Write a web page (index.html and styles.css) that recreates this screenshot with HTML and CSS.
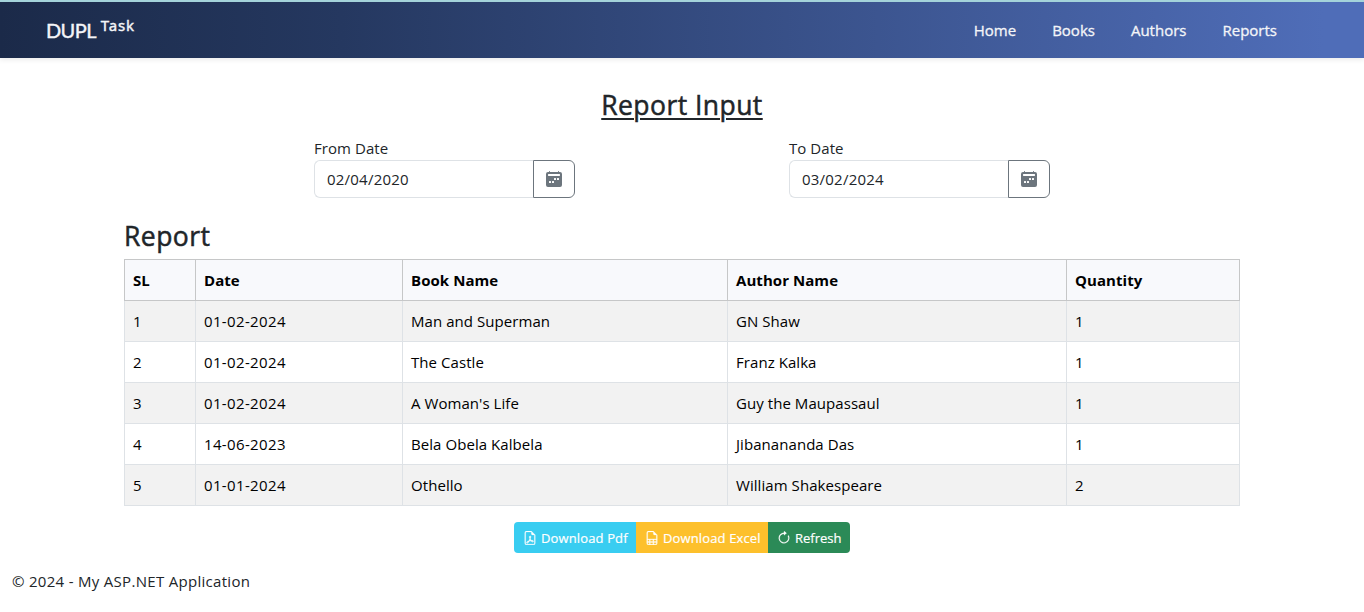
FILE: index.html
```html
<!DOCTYPE html>
<html lang="en">
<head>
<meta charset="utf-8">
<title>Report</title>
<link rel="stylesheet" href="styles.css">
</head>
<body>
<svg class="sprite" aria-hidden="true">
  <symbol id="calendar" viewBox="0 0 16 16"><path d="M3.5 0a.5.5 0 0 1 .5.5V1h8V.5a.5.5 0 0 1 1 0V1h1a2 2 0 0 1 2 2v11a2 2 0 0 1-2 2H2a2 2 0 0 1-2-2V3a2 2 0 0 1 2-2h1V.5a.5.5 0 0 1 .5-.5m9.954 3H2.545c-.3 0-.545.224-.545.5v1c0 .276.244.5.545.5h10.91c.3 0 .545-.224.545-.5v-1c0-.276-.244-.5-.546-.5M8.5 7a.5.5 0 0 0-.5.5v1a.5.5 0 0 0 .5.5h1a.5.5 0 0 0 .5-.5v-1a.5.5 0 0 0-.5-.5zm3 0a.5.5 0 0 0-.5.5v1a.5.5 0 0 0 .5.5h1a.5.5 0 0 0 .5-.5v-1a.5.5 0 0 0-.5-.5zM3 10.5v1a.5.5 0 0 0 .5.5h1a.5.5 0 0 0 .5-.5v-1a.5.5 0 0 0-.5-.5h-1a.5.5 0 0 0-.5.5m3.5-.5a.5.5 0 0 0-.5.5v1a.5.5 0 0 0 .5.5h1a.5.5 0 0 0 .5-.5v-1a.5.5 0 0 0-.5-.5z"/></symbol>
</svg>
<header class="navbar">
  <a class="brand">DUPL<sup class="brand-sup">Task</sup></a>
  <nav class="nav">
    <a>Home</a>
    <a>Books</a>
    <a>Authors</a>
    <a>Reports</a>
  </nav>
</header>
<main class="container">
  <h3 class="title">Report Input</h3>
  <div class="filters">
    <div class="field">
      <label class="label">From Date</label>
      <div class="group">
        <span class="input">02/04/2020</span>
        <button class="pick"><svg width="16" height="16"><use href="#calendar"/></svg></button>
      </div>
    </div>
    <div class="field">
      <label class="label">To Date</label>
      <div class="group">
        <span class="input">03/02/2024</span>
        <button class="pick"><svg width="16" height="16"><use href="#calendar"/></svg></button>
      </div>
    </div>
  </div>
  <h3 class="subtitle">Report</h3>
  <table class="table">
    <colgroup><col class="c1"><col class="c2"><col class="c3"><col class="c4"><col class="c5"></colgroup>
    <thead><tr><th>SL</th><th>Date</th><th>Book Name</th><th>Author Name</th><th>Quantity</th></tr></thead>
    <tbody>
      <tr><td>1</td><td class="date">01-02-2024</td><td>Man and Superman</td><td>GN Shaw</td><td>1</td></tr>
      <tr><td>2</td><td class="date">01-02-2024</td><td>The Castle</td><td>Franz Kalka</td><td>1</td></tr>
      <tr><td>3</td><td class="date">01-02-2024</td><td>A Woman's Life</td><td>Guy the Maupassaul</td><td>1</td></tr>
      <tr><td>4</td><td class="date">14-06-2023</td><td>Bela Obela Kalbela</td><td>Jibanananda Das</td><td>1</td></tr>
      <tr><td>5</td><td class="date">01-01-2024</td><td>Othello</td><td>William Shakespeare</td><td>2</td></tr>
    </tbody>
  </table>
  <div class="actions">
    <button class="btn btn-pdf"><svg viewBox="0 0 16 16"><path d="M14 14V4.5L9.5 0H4a2 2 0 0 0-2 2v12a2 2 0 0 0 2 2h8a2 2 0 0 0 2-2M9.5 3A1.5 1.5 0 0 0 11 4.5h2V14a1 1 0 0 1-1 1H4a1 1 0 0 1-1-1V2a1 1 0 0 1 1-1h5.500z"/><path d="M4.603 14.087a.8.8 0 0 1-.438-.42c-.195-.388-.13-.776.08-1.102.198-.307.526-.568.897-.787a7.700 7.700 0 0 1 1.482-.645 20 20 0 0 0 1.062-2.227 7.300 7.300 0 0 1-.43-1.295c-.086-.4-.119-.796-.046-1.136.075-.354.274-.672.650-.823.192-.077.400-.120.602-.077a.7.7 0 0 1 .477.365c.088.164.120.356.127.538.007.188-.012.396-.047.614-.084.510-.270 1.134-.520 1.794a11 11 0 0 0 .980 1.686 5.800 5.800 0 0 1 1.334.050c.364.066.734.195.960.465.120.144.193.320.200.518.007.192-.047.382-.138.563a1.040 1.040 0 0 1-.354.416.860.860 0 0 1-.510.138c-.331-.014-.654-.196-.933-.417a5.700 5.700 0 0 1-.911-.950 11.700 11.700 0 0 0-1.997.406 11.300 11.300 0 0 1-1.020 1.510c-.292.350-.609.656-.927.787a.8.8 0 0 1-.580.029m1.379-1.901q-.25.115-.459.238c-.328.194-.541.383-.647.547-.094.145-.096.250-.040.361q.016.032.026.044l.035-.012c.137-.056.355-.235.635-.572a8 8 0 0 0 .450-.606m1.640-1.330a13 13 0 0 1 1.010-.193 12 12 0 0 1-.510-.858 21 21 0 0 1-.500 1.050m2.446.450q.226.245.435.410c.240.190.407.253.498.256a.1.1 0 0 0 .070-.015.300.300 0 0 0 .094-.125.440.440 0 0 0 .059-.200.100.100 0 0 0-.026-.063c-.052-.062-.200-.152-.518-.209a4 4 0 0 0-.612-.053zM8.078 7.800a7 7 0 0 0 .200-.828q.046-.282.038-.465a.600.600 0 0 0-.032-.198.500.500 0 0 0-.145.040c-.087.035-.158.106-.196.283-.040.192-.030.469.046.822q.036.167.090.346z"/></svg><span>Download Pdf</span></button>
    <button class="btn btn-excel"><svg viewBox="0 0 16 16"><path d="M14 14V4.500L9.500 0H4a2 2 0 0 0-2 2v12a2 2 0 0 0 2 2h8a2 2 0 0 0 2-2M9.500 3A1.500 1.500 0 0 0 11 4.500h2V9H3V2a1 1 0 0 1 1-1h5.500zM3 12v-2h2v2zm0 1h2v2H4a1 1 0 0 1-1-1zm3 2v-2h3v2zm4 0v-2h3v1a1 1 0 0 1-1 1zm3-3h-3v-2h3zm-7 0v-2h3v2z"/></svg><span>Download Excel</span></button>
    <button class="btn btn-refresh"><svg viewBox="0 0 16 16"><path d="M8 3a5 5 0 1 0 4.546 2.914.5.5 0 0 1 .908-.417A6 6 0 1 1 8 2z"/><path d="M8 4.466V.534a.25.25 0 0 1 .41-.192l2.360 1.966c.12.1.12.284 0 .384L8.410 4.658A.25.25 0 0 1 8 4.466"/></svg><span>Refresh</span></button>
  </div>
</main>
<footer class="footer">© 2024 - My ASP.NET Application</footer>
</body>
</html>
```
FILE: styles.css
```css
* { box-sizing: border-box; }
body {
  margin: 0;
  background: #fff;
  color: #212529;
  font: 15px/24px "Open Sans", "Noto Sans", sans-serif;
  letter-spacing: .06px;
  overflow: hidden;
}
.sprite { display: none; }
.navbar {
  display: flex;
  justify-content: space-between;
  height: 58px;
  padding: 0 87px 0 46px;
  border-top: 2px solid #a4d3da;
  background: linear-gradient(90deg, #1b2a49, #253860 25%, #4f6db8 97%);
  box-shadow: 0 2px 5px rgba(0, 0, 0, .08);
  color: #f4f5f8;
}
.brand { padding-top: 16px; font-family: Lato, sans-serif; font-size: 20px; letter-spacing: -.6px; -webkit-text-stroke: .4px currentColor; }
.brand-sup { margin-left: 5px; font: 15px/1 "Noto Sans", sans-serif; letter-spacing: .8px; vertical-align: 7px; }
.nav { display: flex; gap: 36px; padding-top: 16px; letter-spacing: 0; -webkit-text-stroke: .3px currentColor; }
.container { width: 1116px; margin: 0 auto; padding-top: 30px; }
.title, .subtitle { margin: 0; font-size: 26.5px; line-height: 34px; font-weight: 400; letter-spacing: .45px; -webkit-text-stroke: .5px currentColor; }
.title { text-align: center; text-decoration: underline; text-decoration-thickness: 2px; text-underline-offset: 3px; }
.filters { display: flex; justify-content: space-between; padding: 14px 190px 0; }
.field { width: 261px; }
.label { display: block; }
.group { display: flex; height: 38px; }
.input { flex: 1; padding: 6px 12px; border: 1px solid #dee2e6; border-right: 0; border-radius: 6px 0 0 6px; letter-spacing: .22px; }
.pick { display: flex; align-items: center; justify-content: center; width: 42px; padding: 0; border: 1px solid #6c757d; border-radius: 0 6px 6px 0; background: #fff; color: #6c757d; }
.pick svg { fill: currentColor; }
.subtitle { margin: 21px 0 6px; }
.table { width: 1116px; table-layout: fixed; border-collapse: collapse; color: #000; }
.c1 { width: 71px; }
.c2 { width: 207px; }
.c3 { width: 325px; }
.c4 { width: 339px; }
.c5 { width: 173px; }
th, td { height: 41px; padding: 8px; border: 1px solid #dee2e6; text-align: left; line-height: 24px; }
th { border-color: #c6c7c8; background: #f8f9fc; font-weight: 700; }
.date { letter-spacing: .36px; }
tbody tr:nth-child(odd) { background: #f2f2f2; }
.actions { display: flex; justify-content: center; margin-top: 16px; }
.btn { display: flex; align-items: center; gap: 4px; height: 31px; padding: 1px 0 0 9px; border: 0; color: #fff; font: 13px/21px "Open Sans", sans-serif; letter-spacing: .13px; white-space: nowrap; -webkit-text-stroke: .2px currentColor; }
.btn svg { width: 14px; height: 14px; fill: currentColor; stroke: currentColor; stroke-width: .3; }
.btn-pdf { width: 122px; border-radius: 4px 0 0 4px; background: #39cdf1; }
.btn-excel { width: 132px; background: #fdc02c; }
.btn-refresh { width: 82px; border-radius: 0 4px 4px 0; background: #2b8a57; letter-spacing: 0; }
.footer { margin: 16px 12px 0; letter-spacing: .3px; }
```
